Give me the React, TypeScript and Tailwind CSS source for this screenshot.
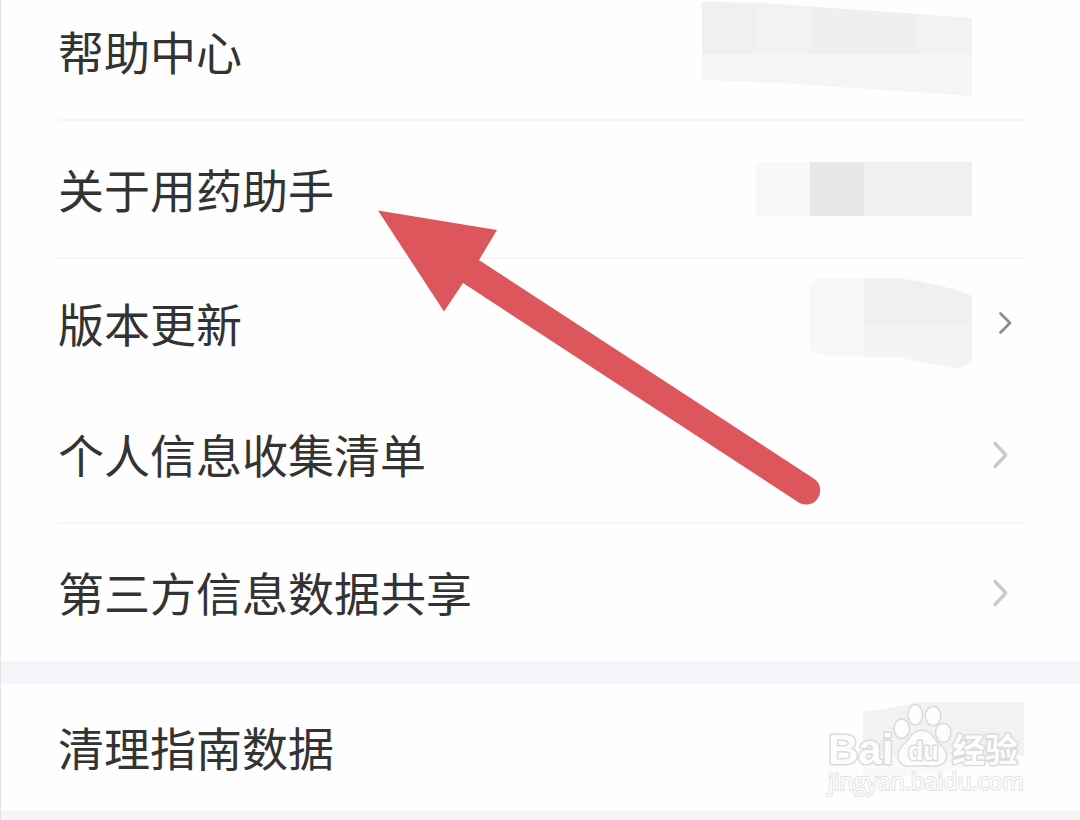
import type { ReactNode } from "react";
import clsx from "clsx";

type Row = {
  label: string;
  size: string;
  divider?: boolean;
  value?: ReactNode;
};

function Chevron({ dark = false }: { dark?: boolean }) {
  return dark ? (
    <svg className="mr-3 shrink-0" width="14" height="24" viewBox="0 0 14 24" fill="none" aria-hidden="true">
      <path d="M2.5 2.5 L12 12 L2.5 21.5" stroke="#8c8c8c" strokeWidth="2.8" strokeLinecap="round" strokeLinejoin="round" />
    </svg>
  ) : (
    <svg className="mr-4 shrink-0" width="16" height="28" viewBox="0 0 16 28" fill="none" aria-hidden="true">
      <path d="M3 2.5 L13 13 Q14 14 13 15 L3 25.5" stroke="#cacaca" strokeWidth="3.4" strokeLinecap="round" strokeLinejoin="round" />
    </svg>
  );
}

function HelpValue() {
  return (
    <svg className="mr-13 shrink-0" width="270" height="102" viewBox="0 0 270 102" aria-hidden="true">
      <path d="M0 2 L60 3 L270 18 L270 96 L80 83 L0 80 Z" fill="#f5f5f5" />
      <path d="M0 2 L60 3 L270 18 L270 54 L0 54 Z" fill="#f2f2f2" />
      <path d="M0 2 L54 3 V54 H0 Z" fill="#f0f0f0" />
      <path d="M108 7 L216 14 V54 H108 Z" fill="#efefef" />
    </svg>
  );
}

function AboutValue() {
  return (
    <svg className="mr-13 shrink-0" width="216" height="54" viewBox="0 0 216 54" aria-hidden="true">
      <path d="M0 0 H54 V54 H0 Z" fill="#f8f8f8" />
      <path d="M54 0 H108 V54 H54 Z" fill="#e7e7e7" />
      <path d="M108 0 H216 V54 H108 Z" fill="#f0f0f0" />
    </svg>
  );
}

function VersionValue() {
  return (
    <>
      <svg className="mr-[26px] shrink-0" width="162" height="92" viewBox="0 0 162 92" aria-hidden="true">
        <path d="M0 8 Q2 2 12 1 L54 1 V80 L16 78 Q4 77 0 72 Z" fill="#f7f7f7" />
        <path d="M54 1 H86 Q130 6 162 19 V84 Q154 92 142 91 Q112 85 86 80 H54 Z" fill="#f4f4f4" />
        <path d="M54 1 H86 Q130 6 162 19 V48 H54 Z" fill="#f0f0f0" />
      </svg>
      <Chevron dark />
    </>
  );
}

function CacheValue() {
  return (
    <svg className="shrink-0" width="161" height="92" viewBox="0 0 161 92" aria-hidden="true">
      <path d="M0 54 H161 Q120 58 96 68 Q50 76 0 74 Z" fill="#f9f9f9" />
      <path d="M0 10 Q30 6 54 0 H161 V54 H0 Z" fill="#f2f2f2" />
    </svg>
  );
}

const GENERAL: Row[] = [
  { label: "帮助中心", size: "h-[138px]", divider: true, value: <HelpValue /> },
  { label: "关于用药助手", size: "h-[138px]", divider: true, value: <AboutValue /> },
  { label: "版本更新", size: "h-[132px] pb-1", value: <VersionValue /> },
  { label: "个人信息收集清单", size: "h-[133px] pb-1", divider: true, value: <Chevron /> },
  { label: "第三方信息数据共享", size: "h-[137px]", value: <Chevron /> },
];

const STORAGE: Row[] = [{ label: "清理指南数据", size: "h-[127px]", value: <CacheValue /> }];

function RowList({ rows }: { rows: Row[] }) {
  return (
    <ul className="bg-[#fefefe] pr-14 pl-[57px]">
      {rows.map((row) => (
        <li key={row.label} className={clsx("border-[#f5f5f5]", row.size, row.divider && "border-b-2")}>
          <a href="#" className="flex h-full items-center justify-between">
            <span className="pb-[3px] text-[46px] leading-none whitespace-nowrap text-[#333]">{row.label}</span>
            <span className="flex items-center">{row.value}</span>
          </a>
        </li>
      ))}
    </ul>
  );
}

function PointerArrow() {
  return (
    <svg
      className="pointer-events-none absolute top-[210px] left-[376px]"
      width="446"
      height="298"
      viewBox="377 210 446 298"
      aria-hidden="true"
    >
      <path
        d="M378 210.5 L497 230 L479 260 L814.5 479 A14.2 14.2 0 0 1 799.5 503 L463 283 L444 311.5 Z"
        fill="#dc565c"
      />
    </svg>
  );
}

function Watermark() {
  return (
    <svg
      className="pointer-events-none absolute right-[54px] bottom-[20px] [paint-order:stroke]"
      width="202"
      height="100"
      viewBox="824 700 202 100"
      fill="#fdfdfd"
      stroke="#dadada"
      strokeWidth="3"
      strokeLinejoin="round"
    >
      <text x="828" y="764" fontSize="42" className="font-['Liberation_Sans',sans-serif] font-bold">
        Bai
      </text>
      <ellipse cx="901.7" cy="728.7" rx="7" ry="9" />
      <ellipse cx="915.3" cy="714.7" rx="6.5" ry="9.5" />
      <ellipse cx="933" cy="716" rx="7" ry="9" />
      <ellipse cx="943.3" cy="732.7" rx="7" ry="8.8" />
      <path d="M922 731 C931 731 933 739 938 744 C944 749 948 754 945 760 C941 768 931 765 922 765 C913 765 903 768 899.5 760 C897 753 901 748 906 743 C911 738 913 731 922 731 Z" />
      <text x="908" y="760" fontSize="25" className="font-['Liberation_Sans',sans-serif] font-bold">
        du
      </text>
      <text x="952" y="762" fontSize="33" className="font-['Liberation_Sans','Noto_Sans_CJK_SC',sans-serif] font-bold">
        经验
      </text>
      <text x="828" y="790" fontSize="23" stroke="#e2e2e2" strokeWidth="2" className="font-['Open_Sans',sans-serif]">
        jingyan.baidu.com
      </text>
    </svg>
  );
}

export default function App() {
  return (
    <main className="relative h-screen overflow-hidden border-l border-[#e4e4e6] bg-[#f6f6fa] font-['Noto_Sans_CJK_SC',sans-serif]">
      <div className="-mt-[17px] flex flex-col gap-[23px]">
        <RowList rows={GENERAL} />
        <RowList rows={STORAGE} />
      </div>
      <PointerArrow />
      <Watermark />
    </main>
  );
}
